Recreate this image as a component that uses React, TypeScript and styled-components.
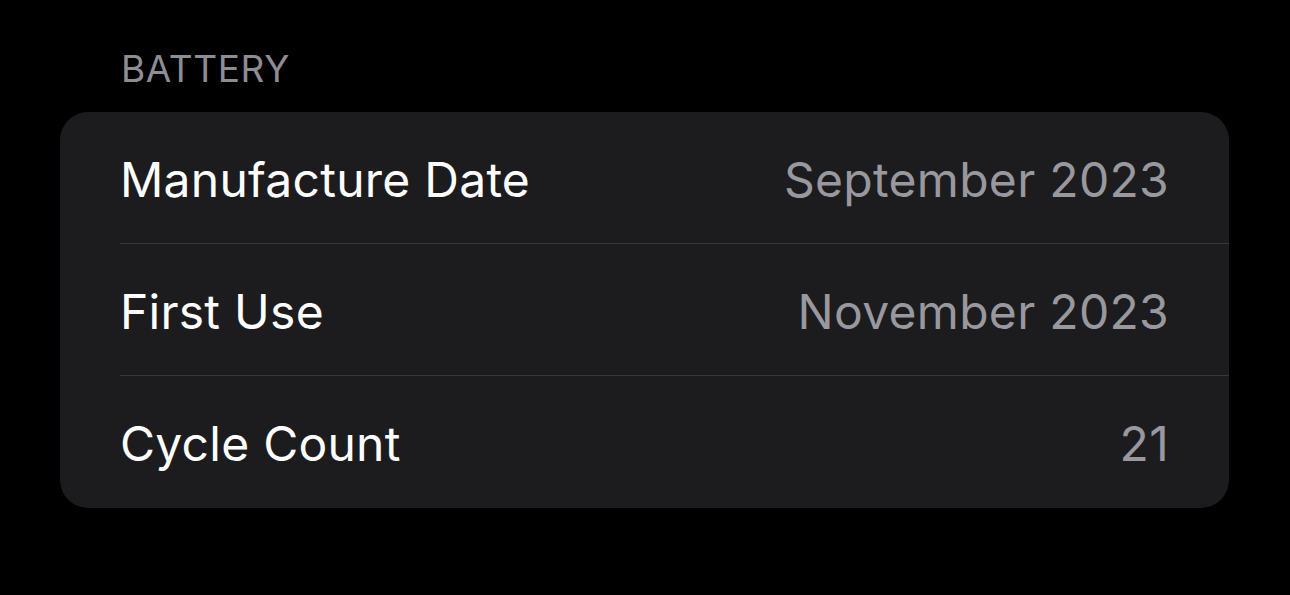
import React from "react";
import styled, { createGlobalStyle } from "styled-components";

const Global = createGlobalStyle`
  html, body { margin: 0; padding: 0; background: #000; }
  body { font-family: Inter, "Noto Sans", sans-serif; -webkit-font-smoothing: antialiased; }
`;

const Page = styled.div`
  width: 1290px;
  height: 595px;
  background: #000;
  box-sizing: border-box;
  padding: 46px 61px 0 60px;
  display: flex;
  flex-direction: column;
`;

const Header = styled.div`
  color: #8d8d93;
  font-size: 37px;
  line-height: 46px;
  letter-spacing: 0.6px;
  padding-left: 61px;
  margin-bottom: 20px;
`;

const Card = styled.div`
  background: #1c1c1e;
  border-radius: 28px;
  overflow: hidden;
`;

const Row = styled.div<{ $last?: boolean }>`
  height: 132px;
  display: flex;
  align-items: center;
  justify-content: space-between;
  margin-left: 60px;
  padding: 3px 60px 0 0;
  box-sizing: border-box;
  border-bottom: ${(p) => (p.$last ? "none" : "1px solid #38383a")};
`;

const Label = styled.span`
  color: #fff;
  font-size: 48px;
  letter-spacing: 0.25px;
`;

const Value = styled.span`
  color: #98989e;
  font-size: 48px;
  letter-spacing: 0.3px;
`;

const rows = [
  ["Manufacture Date", "September 2023"],
  ["First Use", "November 2023"],
  ["Cycle Count", "21"],
];

export default function App() {
  return (
    <>
      <Global />
      <Page>
        <Header>BATTERY</Header>
        <Card>
          {rows.map(([l, v], i) => (
            <Row key={l} $last={i === rows.length - 1}>
              <Label>{l}</Label>
              <Value>{v}</Value>
            </Row>
          ))}
        </Card>
      </Page>
    </>
  );
}
